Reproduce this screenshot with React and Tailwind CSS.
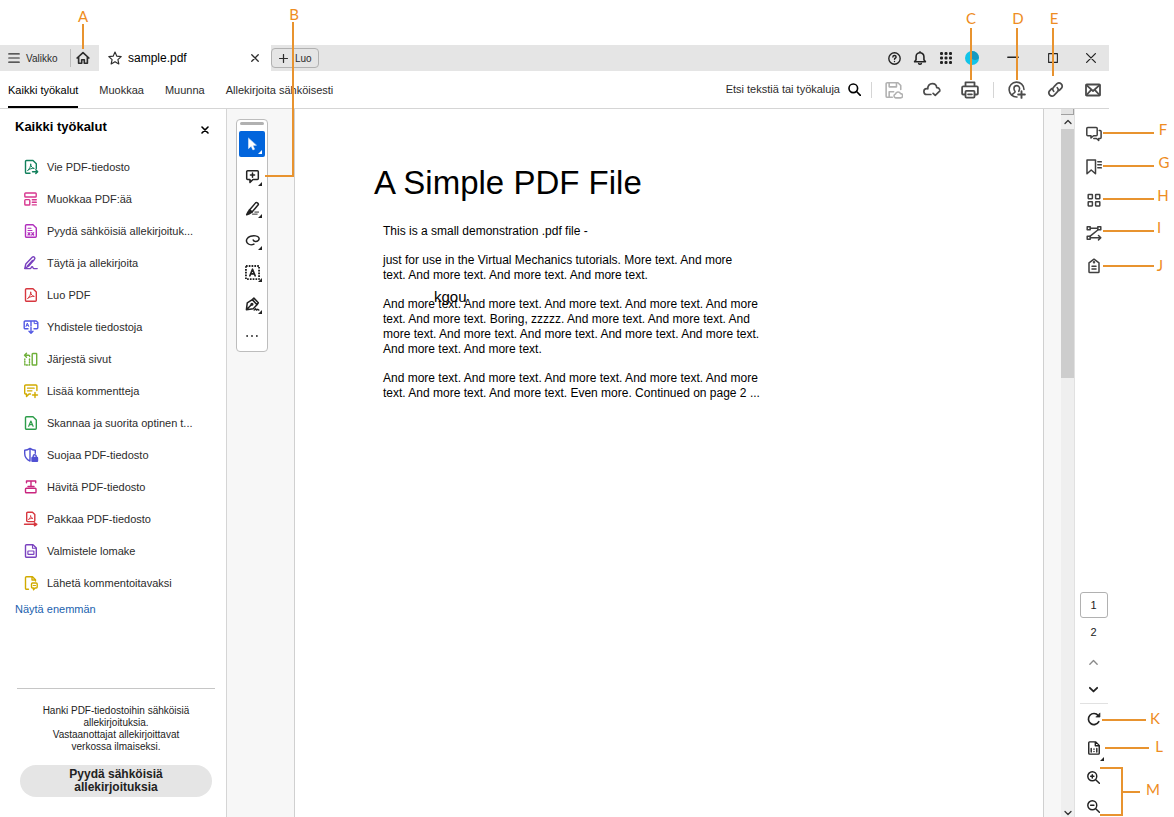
import { useState } from "react";

function Icon({ size = 16, className = "", children, ...rest }) {
  return (
    <svg
      width={size}
      height={size}
      viewBox="0 0 16 16"
      fill="none"
      stroke="currentColor"
      strokeWidth={1.4}
      strokeLinecap="round"
      strokeLinejoin="round"
      className={`shrink-0 ${className}`}
      aria-hidden="true"
      {...rest}
    >
      {children}
    </svg>
  );
}

// the little Acrobat ribbon used inside several file icons
const ribbon = "M4.800 11.300c1.700-1.300 2.900-3.600 2.900-6.500.2 2.700 1.400 4.300 3.600 4.600-2.300-.2-4.500.4-6.500 1.900Z";

const tools = [
  {
    label: "Vie PDF-tiedosto",
    color: "text-[#12805c]",
    icon: (
      <>
        <path d="M7 14.200H3.500a1 1 0 0 1-1-1V2.500a1 1 0 0 1 1-1H10L13.300 4.800V9.500" />
        <path d={ribbon} strokeWidth="1" />
        <path d="M9.500 12.700h5M12.800 10.800l1.900 1.900-1.900 1.900" />
      </>
    ),
  },
  {
    label: "Muokkaa PDF:ää",
    color: "text-[#d83790]",
    icon: (
      <>
        <rect x="1.800" y="2" width="11.400" height="4" rx=".8" />
        <rect x="1.800" y="8.600" width="5" height="5.400" rx=".8" />
        <path d="M9.300 8.700h4M9.300 11.300h4M9.300 13.900h4" />
      </>
    ),
  },
  {
    label: "Pyydä sähköisiä allekirjoituk...",
    color: "text-[#b130bd]",
    icon: (
      <>
        <path d="M3.500 1.700H10L13.300 5v8.200a1 1 0 0 1-1 1H3.500a1 1 0 0 1-1-1V2.700a1 1 0 0 1 1-1Z" />
        <path d="M5 5.200h3M5 7.500h4" strokeWidth="1.100" />
        <path d="M5 9.700l2 2.300M7 9.700L5 12M8.700 9.700l2 2.300M10.700 9.700l-2 2.300" strokeWidth="1.200" />
      </>
    ),
  },
  {
    label: "Täytä ja allekirjoita",
    color: "text-[#7a42bf]",
    icon: (
      <>
        <path d="M1.800 13.300l1-4.300 6.400-6.700a1.500 1.500 0 0 1 2.200 2.200L5.500 11.200l-3.700 2.100ZM4.300 11.200l5.200-5.700" />
        <path d="M1.800 13.600h5.400c1 0 .8-1.800 1.900-1.800s.7 1.800 1.900 1.800h3.200" />
      </>
    ),
  },
  {
    label: "Luo PDF",
    color: "text-[#d7373f]",
    icon: (
      <>
        <path d="M3.500 1.700H10L13.300 5v8.200a1 1 0 0 1-1 1H3.500a1 1 0 0 1-1-1V2.700a1 1 0 0 1 1-1Z" />
        <path d={ribbon} strokeWidth="1" />
      </>
    ),
  },
  {
    label: "Yhdistele tiedostoja",
    color: "text-[#5258e4]",
    icon: (
      <>
        <path d="M5 9.700H2.200a1 1 0 0 1-1-1V3a1 1 0 0 1 1-1h11L14.800 3.600v5.100a1 1 0 0 1-1 1H11M8 2v5" />
        <path d="M3 7.500l1.300-3.500 1.400 3.500M3.500 6.300h1.700M11.200 2v2.600h3" strokeWidth="1" />
        <path d="M8 8.500v5.400M6 12.200l2 2 2-2" />
      </>
    ),
  },
  {
    label: "Järjestä sivut",
    color: "text-[#6fb03a]",
    icon: (
      <>
        <rect x="9.200" y="2.500" width="4.500" height="11.500" rx=".6" />
        <path d="M1.500 4.300h4.200c1 0 1 .5 1 1.200M3.500 2.300l-2 2 2 2" />
        <path d="M6.500 8v6H1.800V8" strokeDasharray="1.200 1.500" />
      </>
    ),
  },
  {
    label: "Lisää kommentteja",
    color: "text-[#d1ab00]",
    icon: (
      <>
        <path d="M7.500 11H6l-2.500 2.600V11h-.8a1 1 0 0 1-1-1V3a1 1 0 0 1 1-1h10.200a1 1 0 0 1 1 1v4.500" />
        <path d="M4.500 5.200h6.700M4.500 7.800h4.500" strokeWidth="1.200" />
        <path d="M12 9.500v5M9.500 12h5" />
      </>
    ),
  },
  {
    label: "Skannaa ja suorita optinen t...",
    color: "text-[#2d9d4a]",
    icon: (
      <>
        <path d="M3.500 1.700H10L13.300 5v8.200a1 1 0 0 1-1 1H3.500a1 1 0 0 1-1-1V2.700a1 1 0 0 1 1-1Z" />
        <path d="M5.700 11.300L7.900 6l2.200 5.300M6.500 9.700h2.800" strokeWidth="1.200" />
      </>
    ),
  },
  {
    label: "Suojaa PDF-tiedosto",
    color: "text-[#5151d3]",
    icon: (
      <>
        <path d="M7 14C3.500 12.500 1.700 10 1.700 6.500V3.300C3.700 3.200 5.500 2.500 7 1.400c1.500 1.100 3.300 1.800 5.300 1.900v3M7 1.400V14" />
        <rect x="9" y="10.500" width="5.500" height="3.800" rx=".4" fill="currentColor" />
        <path d="M10.200 10.300V9.200a1.500 1.500 0 0 1 3 0v1.100" />
      </>
    ),
  },
  {
    label: "Hävitä PDF-tiedosto",
    color: "text-[#c9257f]",
    icon: (
      <>
        <path d="M3.500 3.800V2h9.200v1.800M8 2v5.500M5 7.500h6" />
        <rect x="2.500" y="9.200" width="10.500" height="4.600" rx=".8" />
      </>
    ),
  },
  {
    label: "Pakkaa PDF-tiedosto",
    color: "text-[#d7373f]",
    icon: (
      <>
        <path d="M4.700 1.300h4.800L11.800 3.600v6a1 1 0 0 1-1 1H4.700a1 1 0 0 1-1-1V2.300a1 1 0 0 1 1-1Z" />
        <path d="M5.700 8.300c1.300-.8 2-2.300 1.900-3.800.1 1.700.9 2.700 2.300 2.900-1.400-.1-2.900.2-4.200.9Z" strokeWidth=".9" />
        <path d="M1.500 13.300h12.300M11.500 11.800v3l2.300-1.500Z" fill="currentColor" />
      </>
    ),
  },
  {
    label: "Valmistele lomake",
    color: "text-[#7a42bf]",
    icon: (
      <>
        <path d="M3.500 1.700H10L13.300 5v8.200a1 1 0 0 1-1 1H3.500a1 1 0 0 1-1-1V2.700a1 1 0 0 1 1-1Z" />
        <path d="M9.500 2v3.300H13" strokeWidth="1.100" />
        <rect x="4.900" y="8" width="6" height="3.300" rx=".4" strokeWidth="1.200" />
      </>
    ),
  },
  {
    label: "Lähetä kommentoitavaksi",
    color: "text-[#d1ab00]",
    icon: (
      <>
        <path d="M5.500 14.200h-2a1 1 0 0 1-1-1V2.700a1 1 0 0 1 1-1H9.500L12.500 4.700V6M9 2v3h3" />
        <path d="M9.500 8h3.700a1 1 0 0 1 1 1v3a1 1 0 0 1-1 1h-1.200l-1.500 1.700V13H9.500a1 1 0 0 1-1-1V9a1 1 0 0 1 1-1Z" />
        <path d="M10.300 10.500h2.200" strokeWidth="1.200" />
      </>
    ),
  },
];

const quickTools = [
  {
    label: "Kommentti",
    icon: (
      <>
        <path d="M2.800 1.800h10.400a1 1 0 0 1 1 1v7.400a1 1 0 0 1-1 1H8.500L5.300 14.300v-3.100H2.800a1 1 0 0 1-1-1V2.800a1 1 0 0 1 1-1Z" />
        <path d="M8 4.300v4.400M5.800 6.500h4.400" />
      </>
    ),
  },
  {
    label: "Korostus",
    icon: (
      <>
        <path d="M4.800 9.500l6.500-7.500a1.300 1.300 0 0 1 1.800-.1l.7.600a1.300 1.300 0 0 1 .1 1.800L7.500 11.800Z" />
        <path d="M4.800 9.500l2.700 2.300-2.300 1.500L1.800 14.600l1.500-3Z" fill="currentColor" />
        <path d="M8 14h5M10.500 11.800h4" strokeWidth="1" />
      </>
    ),
  },
  {
    label: "Piirrä",
    icon: (
      <path d="M9.500 11.800c-2.500 1.300-5.700.7-7.200-1.300-1.800-2.500 0-6 3.500-7 3.500-1.100 8-.6 9 1.600.9 2.200-1.300 4.100-3.800 3.900-1.400-.1-2.200-.7-2.300-1.600" />
    ),
  },
  {
    label: "Lisää tekstiä",
    icon: (
      <>
        <rect x="1" y="1" width="14" height="14" strokeDasharray="1.800 1.200" strokeLinecap="butt" strokeWidth="2" />
        <path d="M5.200 11.500L8 4.500l2.800 7M6.200 9.500h3.600" strokeWidth="1.800" />
      </>
    ),
  },
  {
    label: "Allekirjoita",
    icon: (
      <>
        <path d="M1.500 13.500l.9-7.200 5.400-3.500 5 5.500-4 4.200-7.300 1ZM7.800 2.800l1.700-1.600 4.700 5-1.400 2.100M2 13l4.800-4.800" />
        <circle cx="7.400" cy="7.700" r=".9" fill="currentColor" />
        <path d="M9.800 14l1.600-1.500.8 1.500 1.400-1 1.200 1" strokeWidth="1.400" />
      </>
    ),
  },
];

const railTools = [
  {
    label: "Kommentit",
    icon: (
      <>
        <path d="M1.800 1.500h8.400a1 1 0 0 1 1 1v6.300a1 1 0 0 1-1 1H7.500L5 12V9.800H1.800a1 1 0 0 1-1-1V2.500a1 1 0 0 1 1-1Z" />
        <path d="M13.200 4.500h.9a1 1 0 0 1 1 1v6a1 1 0 0 1-1 1h-1.400v2l-2.200-2H7.800" />
      </>
    ),
  },
  {
    label: "Kirjanmerkit",
    icon: (
      <>
        <path d="M1 1h8.500v13.800L5.200 11 1 14.800Z" />
        <path d="M11.800 2.800h3.500M11.800 5.800h3.500M11.800 8.800h3.500" />
      </>
    ),
  },
  {
    label: "Pikkukuvat",
    icon: (
      <>
        <rect x="2.200" y="2.500" width="4.200" height="4.200" rx=".4" />
        <rect x="9.600" y="2.500" width="4.200" height="4.200" rx=".4" />
        <rect x="2.200" y="9.800" width="4.200" height="4.200" rx=".4" />
        <rect x="9.600" y="9.800" width="4.200" height="4.200" rx=".4" />
      </>
    ),
  },
  {
    label: "Järjestys",
    icon: (
      <>
        <rect x="1.200" y="1.800" width="3" height="3" />
        <rect x="11.800" y="1.800" width="3" height="3" />
        <rect x="1.200" y="11.200" width="3" height="3" />
        <path d="M4.500 3.300h7M11.800 5L4.200 11.200M4.500 12.700h10M12.500 10.500l2.300 2.200-2.300 2.200" />
      </>
    ),
  },
  {
    label: "Tunnisteet",
    icon: (
      <>
        <path d="M8 1.200L13 4.800v8.900a.8.800 0 0 1-.8.800H3.800a.8.800 0 0 1-.8-.8V4.800Z" />
        <path d="M6 8.300h4M6 11h4" />
        <circle cx="8" cy="4.300" r=".5" />
      </>
    ),
  },
];

// orange guide lines and their letters
const lines = [
  "left-[82px] top-[24px] w-[2px] h-[25px]",
  "left-[292px] top-[22px] w-[2px] h-[155px]",
  "left-[265px] top-[175px] w-[28px] h-[2px]",
  "right-[202px] top-[28px] w-[2px] h-[52px]",
  "right-[156px] top-[28px] w-[2px] h-[52px]",
  "right-[120px] top-[28px] w-[2px] h-[48px]",
  "right-[20px] top-[132px] w-[51px] h-[2px]",
  "right-[20px] top-[165px] w-[51px] h-[2px]",
  "right-[20px] top-[198px] w-[51px] h-[2px]",
  "right-[20px] top-[230px] w-[51px] h-[2px]",
  "right-[20px] top-[265px] w-[51px] h-[2px]",
  "right-[28px] bottom-[96px] w-[44px] h-[2px]",
  "right-[25px] bottom-[68px] w-[44px] h-[2px]",
  "right-[51px] bottom-[48px] w-[23px] h-[2px]",
  "right-[51px] bottom-[1px] w-[23px] h-[2px]",
  "right-[51px] bottom-[1px] w-[2px] h-[49px]",
  "right-[34px] bottom-[24px] w-[18px] h-[2px]",
];

const letters = [
  { text: "A", at: "left-[73px] top-[6px]" },
  { text: "B", at: "left-[284px] top-[4px]" },
  { text: "C", at: "right-[193px] top-[8px]" },
  { text: "D", at: "right-[146px] top-[8px]" },
  { text: "E", at: "right-[110px] top-[8px]" },
  { text: "F", at: "right-[1px] top-[119px]" },
  { text: "G", at: "right-0 top-[152px]" },
  { text: "H", at: "right-[1px] top-[185px]" },
  { text: "I", at: "right-[5px] top-[217px]" },
  { text: "J", at: "right-[4px] top-[255px]" },
  { text: "K", at: "right-[9px] bottom-[89px]" },
  { text: "L", at: "right-[5px] bottom-[61px]" },
  { text: "M", at: "right-[11px] bottom-[18px]" },
];

function Callouts() {
  return (
    <div className="absolute inset-0 pointer-events-none">
      {lines.map((pos) => (
        <span key={pos} className={`absolute bg-[#e8932f] ${pos}`} />
      ))}
      {letters.map((l) => (
        <span
          key={l.text}
          className={`absolute w-5 text-center font-['Lato',sans-serif] text-[15px] leading-5 text-[#ee8c22] ${l.at}`}
        >
          {l.text}
        </span>
      ))}
    </div>
  );
}

function TitleBar() {
  return (
    <div className="flex items-stretch h-[26px] bg-[#e5e5e5] text-[#2c2c2c]">
      <button className="flex items-center gap-[6px] pl-[8px] w-[70px] text-[10px]">
        <Icon size={12} strokeWidth={1.6}>
          <path d="M1 2.500h14M1 8h14M1 13.500h14" />
        </Icon>
        Valikko
      </button>
      <button aria-label="Koti" className="flex items-center justify-center w-[29px] my-1 pr-1 border-l border-[#bdbdbd]">
        <Icon size={14} strokeWidth={1.9}>
          <path d="M1.300 8L8 1.800 14.700 8M3 7v7h3.500v-4h3v4H13V7" />
        </Icon>
      </button>
      <div className="flex items-center w-[172px] bg-white pl-[9px] pr-[9px]">
        <Icon size={14} strokeWidth={1.3}>
          <path d="M8 1.200l2.100 4.700 5 .5-3.800 3.400 1.100 5L8 12.200l-4.400 2.600 1.100-5L.9 6.400l5-.5Z" />
        </Icon>
        <span className="ml-[6px] text-[12px] text-black">sample.pdf</span>
        <button aria-label="Sulje välilehti" className="ml-auto p-[3px]">
          <Icon size={8} strokeWidth={2.600}>
            <path d="M1.500 1.500l13 13M14.500 1.500l-13 13" />
          </Icon>
        </button>
      </div>
      <button className="self-center flex items-center h-[20px] w-[48px] pl-[7px] gap-[7px] border border-[#b1b1b1] rounded-[4px] text-[10px]">
        <Icon size={9} strokeWidth={2.200}>
          <path d="M8 1v14M1 8h14" />
        </Icon>
        Luo
      </button>

      <div className="ml-auto flex items-center text-[#222]">
        <button aria-label="Ohje" className="flex justify-center w-[26px]">
          <Icon size={13} strokeWidth={1.700}>
            <circle cx="8" cy="8" r="7" />
            <path d="M6 6.200C6 5 6.900 4.300 8 4.300s2 .7 2 1.700c0 1.400-2 1.600-2 3M8 11.600v.1" />
          </Icon>
        </button>
        <button aria-label="Ilmoitukset" className="flex justify-center w-[26px]">
          <Icon size={14} strokeWidth={1.800}>
            <path d="M1.800 12.300h12.400L12.500 10V6.500a4.500 4.500 0 0 0-9 0V10ZM6.500 14.500c.5.800 2.500.8 3 0M8 1.800V1" />
          </Icon>
        </button>
        <button aria-label="Sovellukset" className="flex justify-center w-[26px]">
          <Icon size={12} fill="currentColor" stroke="none">
            {[0, 6, 12].map((y) =>
              [0, 6, 12].map((x) => <rect key={`${x}-${y}`} x={x} y={y} width="4" height="4" rx="1.500" />)
            )}
          </Icon>
        </button>
        <button aria-label="Profiili" className="flex justify-center w-[26px]">
          <Icon size={14} stroke="none">
            <circle cx="8" cy="8" r="8" fill="#12c4e8" />
            <path d="M8 0a8 8 0 0 1 8 8c-2 2.500-5 3-8 1Z" fill="#1799c0" />
          </Icon>
        </button>
        <button aria-label="Pienennä" className="flex justify-center w-10 ml-2">
          <Icon size={12} strokeWidth={1.700}>
            <path d="M1 7h14" />
          </Icon>
        </button>
        <button aria-label="Suurenna" className="flex justify-center w-10">
          <Icon size={10} strokeWidth={1.700}>
            <rect x="1" y="1" width="14" height="14" />
          </Icon>
        </button>
        <button aria-label="Sulje" className="flex justify-center w-9">
          <Icon size={10} strokeWidth={2}>
            <path d="M1 1l14 14M15 1L1 15" />
          </Icon>
        </button>
      </div>
    </div>
  );
}

function ToolBar() {
  const links = ["Kaikki työkalut", "Muokkaa", "Muunna", "Allekirjoita sähköisesti"];
  return (
    <div className="flex items-stretch h-[38px] border-b border-[#d5d5d5] text-[#2c2c2c]">
      <nav className="flex gap-[21px] pl-[8px] text-[11px]">
        {links.map((label, i) => (
          <a
            key={label}
            href="#tools"
            className={`flex items-center pt-[3px] border-b-2 ${i === 0 ? "border-black text-black" : "border-transparent"}`}
          >
            {label}
          </a>
        ))}
      </nav>

      <div className="ml-auto flex items-center gap-[6px] text-[#4b4b4b]">
        <button className="flex items-center gap-[8px] mr-[4px] text-[11px] text-[#2c2c2c]">
          Etsi tekstiä tai työkaluja
          <Icon size={13} strokeWidth={2} className="text-black">
            <circle cx="6.500" cy="6.500" r="5.300" />
            <path d="M10.500 10.500l4.700 4.700" />
          </Icon>
        </button>
        <span className="w-px h-4 bg-[#d5d5d5]" />
        <button aria-label="Tallenna" className="flex justify-center w-8 text-[#b1b1b1]">
          <Icon size={18}>
            <path d="M6.500 14.500H2a1 1 0 0 1-1-1v-11a1 1 0 0 1 1-1h9.500L14 4v3.500M3.700 1.700v3.500h6.500V1.700M3.700 14.300V9.500h4" />
            <path d="M9.500 15a1.800 1.800 0 0 1-.2-3.500 2.400 2.400 0 0 1 4.500-.3 1.900 1.900 0 0 1 0 3.800Z" />
          </Icon>
        </button>
        <button aria-label="Pilvi" className="flex justify-center w-8">
          <Icon size={18} strokeWidth={1.500}>
            <path d="M7 12H3.500a2.600 2.600 0 0 1-.2-5.200c.4 0 .7 0 1 .2-.3-2.600 1.500-4.700 4-4.700 2.200 0 3.700 1.500 3.900 3.600 1.200 0 2.200.6 2.600 1.700M9 11l1.900 1.700L15 8.800" />
          </Icon>
        </button>
        <button aria-label="Tulosta" className="flex justify-center w-8">
          <Icon size={18} strokeWidth={1.600}>
            <path d="M4 4.500V1.300h8v3.200M3.800 12H2a1 1 0 0 1-1-1V5.700a1 1 0 0 1 1-1h12a1 1 0 0 1 1 1V11a1 1 0 0 1-1 1h-1.800" />
            <rect x="4" y="8.800" width="8" height="6" rx=".8" />
            <path d="M6.300 11.800h3.400" />
          </Icon>
        </button>
        <span className="w-px h-4 mx-px bg-[#d5d5d5]" />
        <button aria-label="Jaa" className="flex justify-center w-8">
          <Icon size={18}>
            <path d="M8 14.200A6.600 6.600 0 1 1 14.200 7.500" />
            <path d="M4 12.300c0-1.500 2.300-1.500 2.300-2.700 0-.8-1-1-1-3a2.500 2.500 0 0 1 5 0c0 1.400-.7 1.800-.7 2.700" />
            <path d="M12 9v6M9 12h6" strokeWidth="1.700" />
          </Icon>
        </button>
        <button aria-label="Linkki" className="flex justify-center w-8">
          <Icon size={17} strokeWidth={1.600}>
            <path d="M6.300 9.700a3 3 0 0 1 .2-4.200l2.900-3a3 3 0 0 1 4.200 4.200l-2 2.100M9.700 6.300a3 3 0 0 1-.2 4.200l-2.900 3a3 3 0 0 1-4.200-4.200l2-2.100" />
          </Icon>
        </button>
        <button aria-label="Sähköposti" className="flex justify-center w-8">
          <Icon size={16} strokeWidth={1.800}>
            <rect x="1" y="2.500" width="14" height="11" rx=".8" />
            <path d="M1.500 3.200L8 9l6.500-5.800M1.500 13l4.700-5.200M14.500 13L9.800 7.800" />
          </Icon>
        </button>
      </div>
    </div>
  );
}

function Sidebar() {
  return (
    <aside className="flex flex-col shrink-0 w-[227px] border-r border-[#d5d5d5]">
      <div className="flex items-center justify-between h-9 mb-[6px] pl-[15px] pr-[17px]">
        <h2 className="text-[13px] font-bold text-black">Kaikki työkalut</h2>
        <button aria-label="Sulje paneeli" className="mt-[6px]">
          <Icon size={8} strokeWidth={3.200}>
            <path d="M2 2l12 12M14 2L2 14" />
          </Icon>
        </button>
      </div>
      <ul>
        {tools.map((tool) => (
          <li key={tool.label}>
            <button className="flex items-center gap-2 w-full h-8 pl-[23px] text-[11px] text-[#2c2c2c] hover:bg-gray-100">
              <Icon className={tool.color}>{tool.icon}</Icon>
              {tool.label}
            </button>
          </li>
        ))}
      </ul>
      <a href="#more" className="pl-[15px] text-[11px] leading-5 text-[#1b5fae] hover:underline">
        Näytä enemmän
      </a>

      <div className="mt-auto ml-[17px] mr-[11px] pt-4 pb-5 border-t border-[#c6c6c6] text-center text-[#222]">
        <p className="mx-5 text-[10px] leading-3">
          Hanki PDF-tiedostoihin sähköisiä allekirjoituksia.
          <br />
          Vastaanottajat allekirjoittavat verkossa ilmaiseksi.
        </p>
        <button className="block w-[192px] h-8 mt-3 ml-[3px] px-10 rounded-full bg-[#e5e5e5] text-[12px] leading-[13px] font-bold">
          Pyydä sähköisiä allekirjoituksia
        </button>
      </div>
    </aside>
  );
}

// small black triangle in the corner of a tool button
function Corner({ className = "right-[3px] bottom-[3px]" }) {
  return (
    <svg width="4" height="4" viewBox="0 0 4 4" className={`absolute ${className}`} aria-hidden="true">
      <path d="M4 0v4H0Z" fill="currentColor" />
    </svg>
  );
}

function QuickTools() {
  return (
    <div className="w-8 mt-[10px] ml-[9px] pt-[2px] rounded-[4px] border border-[#bdbdbd] bg-white text-[#222]">
      <div className="h-[3px] mx-[3px] mb-[3px] rounded-full bg-[#b1b1b1]" />
      <div className="flex flex-col items-center">
        <button aria-label="Valitse" className="relative flex items-center justify-center w-[26px] h-[26px] my-[3px] rounded-[2px] bg-[#0265dc] text-white">
          <Icon size={14} fill="currentColor" strokeWidth={0.500}>
            <path d="M4 1.500v11.800l3-2.700 2 4.200 2-.9-2-4.200 3.800-.3Z" />
          </Icon>
          <Corner />
        </button>
        {quickTools.map((tool) => (
          <button key={tool.label} aria-label={tool.label} className="relative flex items-center justify-center w-[26px] h-8">
            <Icon size={15} strokeWidth={1.600}>{tool.icon}</Icon>
            <Corner className="right-[3px] bottom-[6px]" />
          </button>
        ))}
        <button aria-label="Lisää" className="flex items-center justify-center w-[26px] h-[31px]">
          <Icon size={12} fill="currentColor" stroke="none">
            <circle cx="1.500" cy="8" r="1.200" />
            <circle cx="8" cy="8" r="1.200" />
            <circle cx="14.500" cy="8" r="1.200" />
          </Icon>
        </button>
      </div>
    </div>
  );
}

function Page() {
  return (
    <article className="flex-1 min-w-0 pt-[54px] pl-[79px] bg-white border-x border-[#d0d0d0] text-black">
      <h1 className="text-[33px] leading-10">A Simple PDF File</h1>
      <div className="flex flex-col gap-[14px] mt-[21px] ml-[9px] text-[12px] leading-[15px] whitespace-nowrap">
        <p>This is a small demonstration .pdf file -</p>
        <p>
          just for use in the Virtual Mechanics tutorials. More text. And more
          <br />
          text. And more text. And more text. And more text.
        </p>
        <p className="relative">
          And more text. And more text. And more text. And more text. And more
          <br />
          text. And more text. Boring, zzzzz. And more text. And more text. And
          <br />
          more text. And more text. And more text. And more text. And more text.
          <br />
          And more text. And more text.
          <span className="absolute left-[51px] top-[-10px] text-[15px] leading-5">kgou</span>
        </p>
        <p>
          And more text. And more text. And more text. And more text. And more
          <br />
          text. And more text. And more text. Even more. Continued on page 2 ...
        </p>
      </div>
    </article>
  );
}

function ScrollBar() {
  return (
    <div className="flex flex-col items-center w-[13px] ml-[17px] bg-[#efefef] text-[#333]">
      <div className="w-full h-[6px] border-b border-r border-[#a0a0a0] bg-[#e3e3e3]" />
      <div className="flex items-center h-[14px]">
        <Icon size={8} strokeWidth={2.600}>
          <path d="M2 11l6-6 6 6" />
        </Icon>
      </div>
      <div className="w-full h-[249px] bg-[#cdcdcd]" />
      <Icon size={8} strokeWidth={2.600} className="mt-auto">
        <path d="M2 5l6 6 6-6" />
      </Icon>
    </div>
  );
}

function RightRail() {
  const [page, setPage] = useState("1");
  const cell = "relative flex items-center justify-center w-[28px] h-[22px]";
  return (
    <aside className="flex flex-col items-center shrink-0 w-[35px] pt-2 pl-[3px] border-l border-[#e1e1e1] text-[#222]">
      {railTools.map((tool) => (
        <button key={tool.label} aria-label={tool.label} className="flex items-center justify-center w-[28px] h-[33px] text-[#3f3f3f]">
          <Icon strokeWidth={1.500}>{tool.icon}</Icon>
        </button>
      ))}

      <input
        aria-label="Sivunumero"
        value={page}
        onChange={(e) => setPage(e.target.value)}
        className="mt-auto w-[28px] h-[26px] rounded-[3px] border border-[#b1b1b1] text-center text-[11px]"
      />
      <span className="mt-[3px] text-[11px] leading-[22px]">2</span>
      <div className="flex flex-col gap-[5px] mt-2">
        <button aria-label="Edellinen sivu" className={cell}>
          <Icon size={9} strokeWidth={2.400} className="text-[#8a8a8a]">
            <path d="M1.500 11L8 4.500l6.500 6.500" />
          </Icon>
        </button>
        <button aria-label="Seuraava sivu" className={cell}>
          <Icon size={9} strokeWidth={3.200}>
            <path d="M1.500 5L8 11.500 14.500 5" />
          </Icon>
        </button>
      </div>
      <div className="w-[28px] h-px mt-[3px] mb-1 bg-[#e1e1e1]" />
      <div className="flex flex-col gap-[7px]">
        <button aria-label="Kierrä" className={cell}>
          <Icon size={14} strokeWidth={1.900}>
            <path d="M13.500 11A6.300 6.300 0 1 1 12.800 4" />
            <path d="M14.800 1.500v4.300h-4.300Z" fill="currentColor" strokeWidth=".8" />
          </Icon>
        </button>
        <button aria-label="Todellinen koko" className={cell}>
          <Icon size={14} strokeWidth={1.600}>
            <path d="M3 1h7l4 4v9a1 1 0 0 1-1 1H3a1 1 0 0 1-1-1V2a1 1 0 0 1 1-1ZM9.500 1.500v4h4" />
            <path d="M4.800 8.500v4M8 9.200v.2M8 11.800v.2M11.200 8.500v4" />
          </Icon>
          <Corner className="right-[4px] bottom-[2px] translate-y-1" />
        </button>
        <button aria-label="Lähennä" className={cell}>
          <Icon size={13} strokeWidth={1.800}>
            <circle cx="6.500" cy="6.500" r="5.500" />
            <path d="M10.700 10.700l4.500 4.500M6.500 4.500v4M4.500 6.500h4" />
          </Icon>
        </button>
        <button aria-label="Loitonna" className={cell}>
          <Icon size={13} strokeWidth={1.800}>
            <circle cx="6.500" cy="6.500" r="5.500" />
            <path d="M10.700 10.700l4.500 4.500M4.500 6.500h4" />
          </Icon>
        </button>
      </div>
    </aside>
  );
}

export default function App() {
  return (
    <div className="relative flex flex-col min-h-screen pt-[45px] pr-[65px] bg-white font-['Liberation_Sans',Arial,sans-serif]">
      <TitleBar />
      <ToolBar />
      <div className="flex flex-1">
        <Sidebar />
        <main className="flex flex-1 min-w-0 bg-[#f7f7f7]">
          <div className="shrink-0 w-[67px]">
            <QuickTools />
          </div>
          <Page />
          <ScrollBar />
        </main>
        <RightRail />
      </div>
      <Callouts />
    </div>
  );
}
